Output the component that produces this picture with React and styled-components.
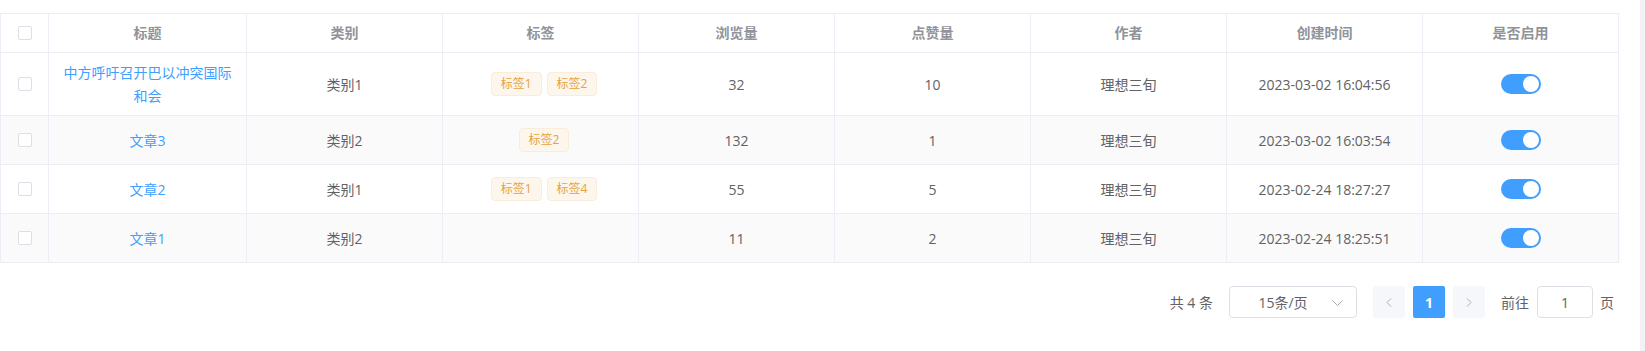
import React from "react";
import styled, { createGlobalStyle } from "styled-components";

const GlobalStyle = createGlobalStyle`
  html, body { margin: 0; padding: 0; background: #ffffff; }
  body {
    font-family: "Open Sans", "Noto Sans CJK SC", sans-serif;
    font-size: 14px;
    color: #606266;
    -webkit-font-smoothing: antialiased;
  }
  * { box-sizing: border-box; }
`;

const Page = styled.div`
  display: flex;
  width: 1645px;
  height: 351px;
  overflow: hidden;
`;

const Main = styled.div`
  width: 1640px;
  padding: 13px 20px 0 0;
  background: #ffffff;
`;

const SideStrip = styled.div`
  flex: 0 0 5px;
  background: #f0f2f5;
`;

const Table = styled.div`
  width: 1620px;
  border-top: 1px solid #ebeef5;
  border-left: 1px solid #ebeef5;
`;

const Row = styled.div`
  display: grid;
  grid-template-columns: 48px 198px repeat(7, 196px);
  background: ${(p) => (p.$striped ? "#fafafa" : "#ffffff")};
`;

const Cell = styled.div`
  display: flex;
  align-items: center;
  justify-content: center;
  text-align: center;
  padding: 8px 12px;
  border-right: 1px solid #ebeef5;
  border-bottom: 1px solid #ebeef5;
  line-height: 23px;
  color: #606266;
  min-width: 0;
`;

const HeadCell = styled(Cell)`
  line-height: 22px;
  color: #909399;
  font-weight: 700;
`;

const Checkbox = styled.span`
  display: inline-block;
  width: 14px;
  height: 14px;
  border: 1px solid #dcdfe6;
  border-radius: 2px;
  background: #ffffff;
`;

const Link = styled.span`
  color: #409eff;
  word-break: break-all;
`;

const TagGroup = styled.div`
  display: flex;
  gap: 5px;
  padding-left: 7px;
`;

const Tag = styled.span`
  display: inline-flex;
  align-items: center;
  height: 24px;
  padding: 0 9px;
  font-size: 12px;
  line-height: 1;
  color: #e6a23c;
  background: #fdf6ec;
  border: 1px solid #faecd8;
  border-radius: 4px;
  white-space: nowrap;
`;

const SwitchWrap = styled.span`
  display: inline-flex;
  align-items: center;
  height: 32px;
`;

const SwitchCore = styled.span`
  position: relative;
  display: inline-block;
  width: 40px;
  height: 20px;
  border-radius: 10px;
  background: ${(p) => (p.$on ? "#409eff" : "#dcdfe6")};
`;

const SwitchKnob = styled.span`
  position: absolute;
  top: 2px;
  left: ${(p) => (p.$on ? "22px" : "2px")};
  width: 16px;
  height: 16px;
  border-radius: 50%;
  background: #ffffff;
`;

const Pagination = styled.div`
  display: flex;
  justify-content: flex-end;
  align-items: center;
  height: 32px;
  margin-top: 23px;
  padding-right: 6px;
  color: #606266;
  font-size: 14px;
`;

const Total = styled.span`
  margin-right: 16px;
  white-space: pre;
`;

const SizeSelect = styled.div`
  position: relative;
  display: flex;
  align-items: center;
  justify-content: center;
  width: 128px;
  height: 32px;
  padding: 0 32px 0 12px;
  border: 1px solid #dcdfe6;
  border-radius: 4px;
  margin-right: 16px;
  color: #606266;
  white-space: nowrap;
`;

const SelectArrow = styled.svg`
  position: absolute;
  right: 13px;
  top: 13px;
`;

const PageButtons = styled.div`
  display: flex;
  gap: 8px;
  margin-right: 16px;
`;

const PageBtn = styled.div`
  display: flex;
  align-items: center;
  justify-content: center;
  width: 32px;
  height: 32px;
  border-radius: 2px;
  background: ${(p) => (p.$active ? "#409eff" : "#f5f7fa")};
  color: ${(p) => (p.$active ? "#ffffff" : "#a8abb2")};
  font-weight: 700;
`;

const Label = styled.span`
  white-space: nowrap;
`;

const JumpInput = styled.div`
  display: flex;
  align-items: center;
  justify-content: center;
  width: 56px;
  height: 32px;
  margin: 0 7px 0 8px;
  border: 1px solid #dcdfe6;
  border-radius: 4px;
  color: #606266;
`;

const rows = [
  { title: "中方呼吁召开巴以冲突国际和会", cat: "类别1", tags: ["标签1", "标签2"], views: 32, likes: 10, author: "理想三旬", time: "2023-03-02 16:04:56" },
  { title: "文章3", cat: "类别2", tags: ["标签2"], views: 132, likes: 1, author: "理想三旬", time: "2023-03-02 16:03:54" },
  { title: "文章2", cat: "类别1", tags: ["标签1", "标签4"], views: 55, likes: 5, author: "理想三旬", time: "2023-02-24 18:27:27" },
  { title: "文章1", cat: "类别2", tags: [], views: 11, likes: 2, author: "理想三旬", time: "2023-02-24 18:25:51" },
];

const headers = ["标题", "类别", "标签", "浏览量", "点赞量", "作者", "创建时间", "是否启用"];

const Chevron = ({ dir }) => (
  <svg width="6" height="9" viewBox="0 0 6 9">
    <path
      d={dir === "left" ? "M5 0.5 L1 4.5 L5 8.5" : "M1 0.5 L5 4.5 L1 8.5"}
      fill="none"
      stroke="#a8abb2"
      strokeWidth="1"
    />
  </svg>
);

export default function App() {
  return (
    <>
      <GlobalStyle />
      <Page>
        <Main>
          <Table>
            <Row>
              <HeadCell>
                <Checkbox />
              </HeadCell>
              {headers.map((h) => (
                <HeadCell key={h}>{h}</HeadCell>
              ))}
            </Row>
            {rows.map((r, i) => (
              <Row key={r.title} $striped={i % 2 === 1}>
                <Cell>
                  <Checkbox />
                </Cell>
                <Cell>
                  <Link>{r.title}</Link>
                </Cell>
                <Cell>{r.cat}</Cell>
                <Cell>
                  {r.tags.length > 0 && (
                    <TagGroup>
                      {r.tags.map((t) => (
                        <Tag key={t}>{t}</Tag>
                      ))}
                    </TagGroup>
                  )}
                </Cell>
                <Cell>{r.views}</Cell>
                <Cell>{r.likes}</Cell>
                <Cell>{r.author}</Cell>
                <Cell>{r.time}</Cell>
                <Cell>
                  <SwitchWrap>
                    <SwitchCore $on>
                      <SwitchKnob $on />
                    </SwitchCore>
                  </SwitchWrap>
                </Cell>
              </Row>
            ))}
          </Table>
          <Pagination>
            <Total>共 4 条</Total>
            <SizeSelect>
              15条/页
              <SelectArrow width="11" height="6" viewBox="0 0 11 6">
                <path d="M0.5 0.5 L5.5 5.5 L10.5 0.5" fill="none" stroke="#a8abb2" strokeWidth="1" />
              </SelectArrow>
            </SizeSelect>
            <PageButtons>
              <PageBtn>
                <Chevron dir="left" />
              </PageBtn>
              <PageBtn $active>1</PageBtn>
              <PageBtn>
                <Chevron dir="right" />
              </PageBtn>
            </PageButtons>
            <Label>前往</Label>
            <JumpInput>1</JumpInput>
            <Label>页</Label>
          </Pagination>
        </Main>
        <SideStrip />
      </Page>
    </>
  );
}
